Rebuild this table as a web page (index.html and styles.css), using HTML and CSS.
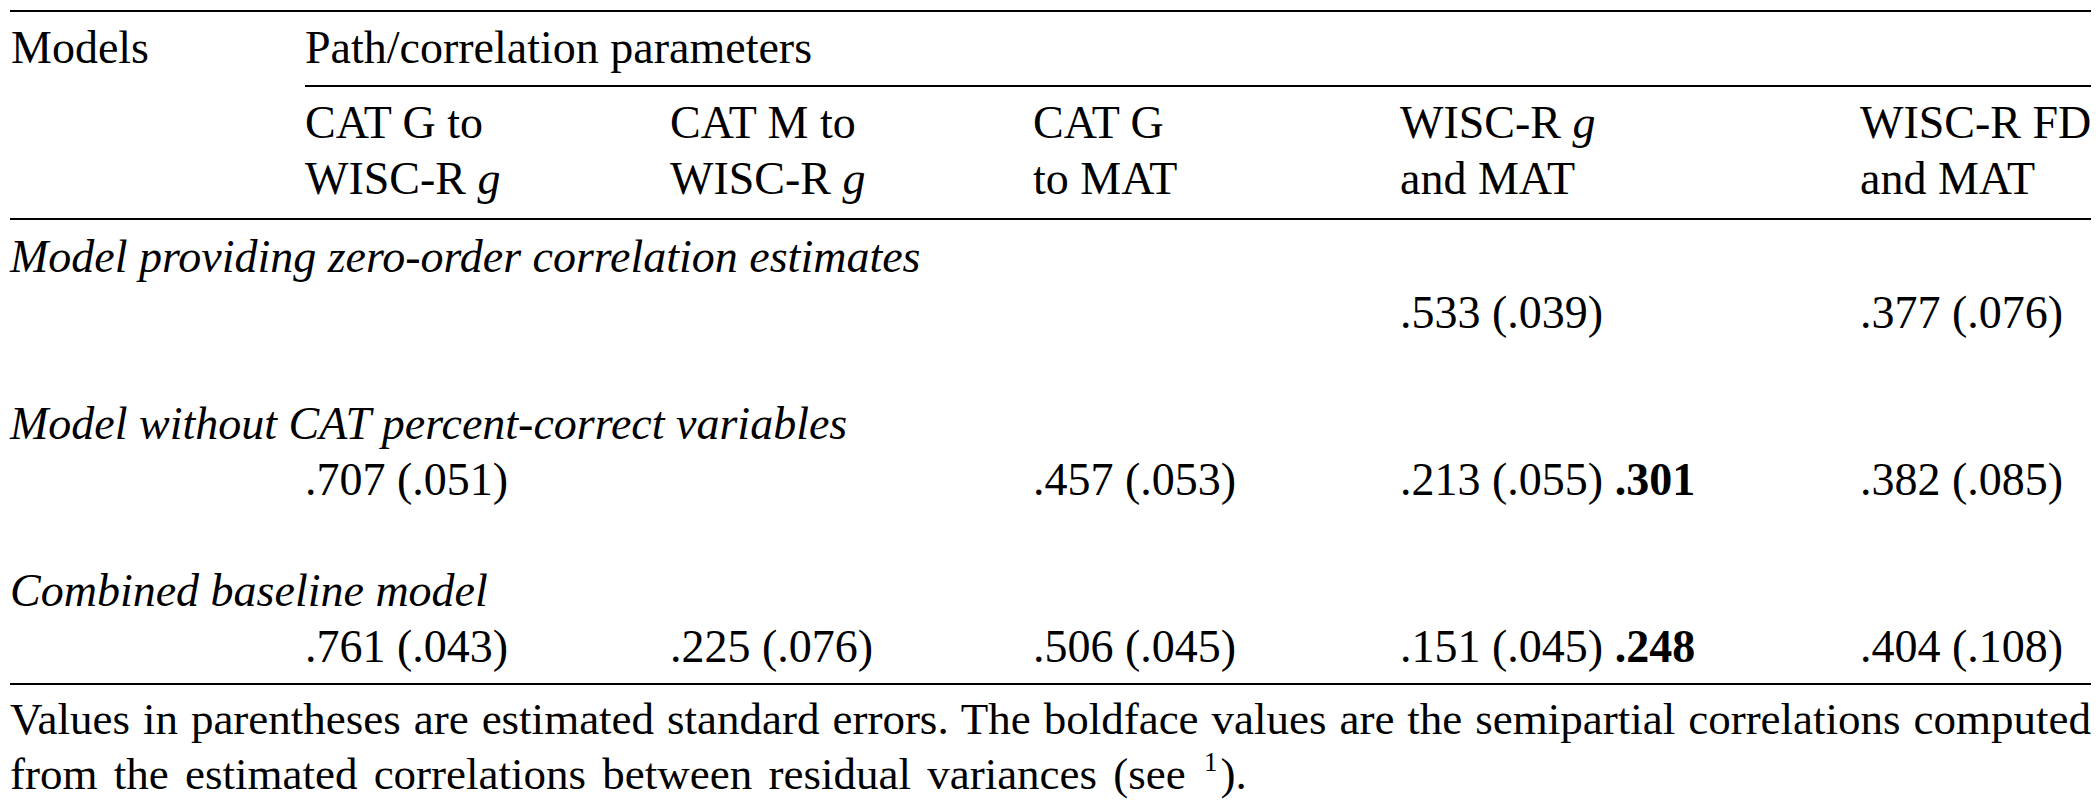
FILE: index.html
```html
<!DOCTYPE html>
<html lang="en">
<head>
<meta charset="utf-8">
<title>Path/correlation parameters</title>
<link rel="stylesheet" href="styles.css">
</head>
<body>
<div class="page">
  <div class="table">
    <div class="thead">
      <div class="cell models">Models</div>
      <div class="cell group-head">Path/correlation parameters</div>
      <div class="cell sub">CAT G to<br>WISC-R <i>g</i></div>
      <div class="cell sub">CAT M to<br>WISC-R <i>g</i></div>
      <div class="cell sub">CAT G<br>to MAT</div>
      <div class="cell sub">WISC-R <i>g</i><br>and MAT</div>
      <div class="cell sub">WISC-R FD<br>and MAT</div>
    </div>
    <div class="tbody">
      <div class="section first">
        <div class="sec-title">Model providing zero-order correlation estimates</div>
        <div class="cell"></div>
        <div class="cell"></div>
        <div class="cell"></div>
        <div class="cell"></div>
        <div class="cell">.533 (.039)</div>
        <div class="cell">.377 (.076)</div>
      </div>
      <div class="section">
        <div class="sec-title">Model without CAT percent-correct variables</div>
        <div class="cell"></div>
        <div class="cell">.707 (.051)</div>
        <div class="cell"></div>
        <div class="cell">.457 (.053)</div>
        <div class="cell">.213 (.055) <b>.301</b></div>
        <div class="cell">.382 (.085)</div>
      </div>
      <div class="section last">
        <div class="sec-title">Combined baseline model</div>
        <div class="cell"></div>
        <div class="cell">.761 (.043)</div>
        <div class="cell">.225 (.076)</div>
        <div class="cell">.506 (.045)</div>
        <div class="cell">.151 (.045) <b>.248</b></div>
        <div class="cell">.404 (.108)</div>
      </div>
    </div>
  </div>
  <p class="note">Values in parentheses are estimated standard errors. The boldface values are the semipartial correlations computed <span class="tail">from the estimated correlations between residual variances (see&nbsp;<sup>1</sup>).</span></p>
</div>
</body>
</html>
```

FILE: styles.css
```css
html, body {
  margin: 0;
  padding: 0;
  background: #ffffff;
}

body {
  font-family: "Liberation Serif", "Times New Roman", serif;
  font-size: 45px;
  line-height: 56px;
  color: #000000;
}

.page {
  width: 2081px;
  padding: 10px 10px 0 10px;
}

.table {
  font-size: 46px;
  border-top: 2px solid #000000;
  border-bottom: 2px solid #000000;
}

.thead {
  display: grid;
  grid-template-columns: 295px 365px 363px 367px 460px 231px;
  border-bottom: 2px solid #000000;
}

.cell {
  white-space: nowrap;
}

.models {
  grid-column: 1;
  grid-row: 1 / span 2;
  padding-top: 8px;
  padding-left: 1px;
}

.group-head {
  grid-column: 2 / 7;
  grid-row: 1;
  padding-top: 8px;
  padding-bottom: 9px;
  border-bottom: 2px solid #000000;
}

.sub {
  grid-row: 2;
  padding-top: 8px;
  padding-bottom: 11px;
}

.tbody {
  padding-top: 9px;
  padding-bottom: 8px;
}

.section {
  display: grid;
  grid-template-columns: 295px 365px 363px 367px 460px 231px;
  margin-top: 55px;
}

.section.first {
  margin-top: 0;
}

.sec-title {
  grid-column: 1 / -1;
  font-style: italic;
  white-space: nowrap;
}

.note {
  margin: 0;
  padding-top: 7px;
  line-height: 55px;
  text-align: justify;
}

.note .tail {
  word-spacing: 5px;
}

.note sup {
  font-size: 0.6em;
  line-height: 0;
  vertical-align: 18px;
  margin: 0 3px 0 2px;
}
```
